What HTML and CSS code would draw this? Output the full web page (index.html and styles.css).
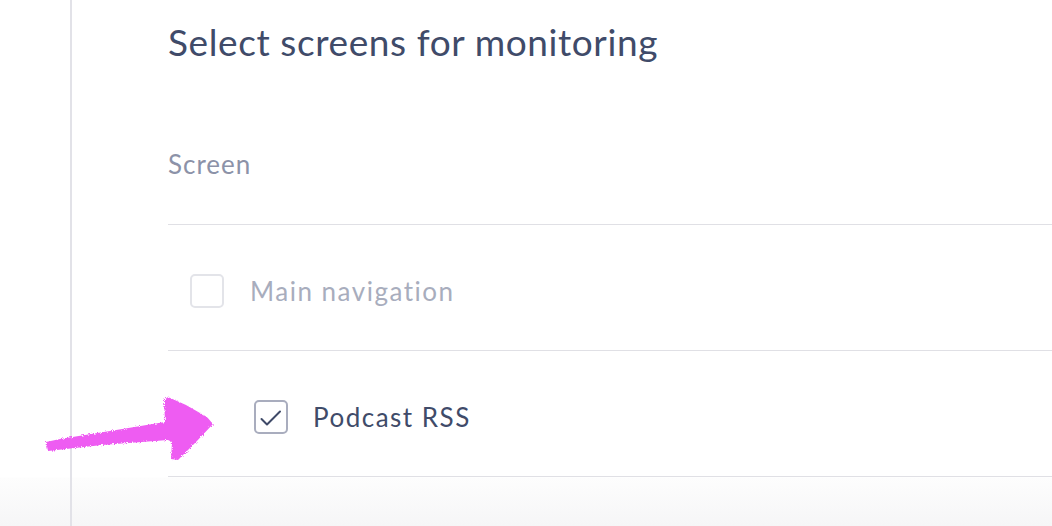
FILE: index.html
```html
<!DOCTYPE html>
<html lang="en">
<head>
  <meta charset="UTF-8" />
  <meta name="viewport" content="width=device-width, initial-scale=1" />
  <title>Select screens for monitoring</title>
  <link rel="stylesheet" href="styles.css">
</head>
<body>
  <div class="layout">
    <aside class="rail"></aside>

    <main class="content">
      <h1 class="page-title">Select screens for monitoring</h1>

      <div class="screen-table">
        <div class="table-head">Screen</div>

        <label class="screen-row disabled">
          <span class="check"></span>
          <span class="screen-name">Main navigation</span>
        </label>

        <label class="screen-row child">
          <span class="check checked">
            <svg viewBox="0 0 34 34" width="34" height="34">
              <polyline points="7.5,19 13,24.5 26,11.5" fill="none" stroke="#3f4a68" stroke-width="2" stroke-linecap="round" stroke-linejoin="round"/>
            </svg>
          </span>
          <span class="screen-name">Podcast RSS</span>
        </label>
      </div>
    </main>
  </div>

  <!-- hand drawn annotation -->
  <svg class="annotation" viewBox="0 0 190 80" width="190" height="80">
    <defs>
      <filter id="rough" x="-10%" y="-10%" width="120%" height="120%">
        <feTurbulence type="fractalNoise" baseFrequency="0.9" numOctaves="2" seed="3" result="noise"/>
        <feDisplacementMap in="SourceGraphic" in2="noise" scale="4"/>
      </filter>
    </defs>
    <path filter="url(#rough)" fill="#ee5cf2"
      d="M6,52 L8,61 L62,55 L128,50 L132,52 L131,69 L138,70 L156,52 L173,34 L167,27 L146,15 L128,7 L124,10 L125,32 L70,41 L20,49 Z"/>
  </svg>
</body>
</html>
```

FILE: styles.css
```css
body {
  margin: 0;
  min-height: 100vh;
  font-family: Lato, "Open Sans", sans-serif;
  color: #404b69;
  background: linear-gradient(to bottom, #fff 0, #fff 477px, #fdfdfd 478px, #f6f6f7 100%);
}

.layout {
  display: flex;
  min-height: 100vh;
}

.rail {
  width: 70px;
  flex-shrink: 0;
  border-right: 2px solid #e2e2e8;
}

.content {
  flex: 1;
  padding-left: 96px;
}

.page-title {
  margin: 20px 0 0;
  font-size: 37px;
  line-height: 44px;
  font-weight: 400;
  letter-spacing: 0.6px;
  color: #404b69;
}

.table-head {
  height: 161px;
  box-sizing: border-box;
  padding-top: 85px;
  font-size: 26px;
  line-height: 31px;
  letter-spacing: 1px;
  color: #8c92a8;
  border-bottom: 1px solid #e0e0e5;
}

.screen-row {
  display: flex;
  align-items: center;
  height: 126px;
  box-sizing: border-box;
  padding: 7px 0 0 22px;
  border-bottom: 1px solid #e0e0e5;
  font-size: 26px;
  line-height: 31px;
  letter-spacing: 1.5px;
  cursor: pointer;
}

.screen-row.child {
  padding-left: 86px;
}

.check {
  width: 34px;
  height: 34px;
  box-sizing: border-box;
  border: 2px solid #a9adbe;
  border-radius: 5px;
  margin-right: 25px;
  position: relative;
  flex-shrink: 0;
}

.check svg {
  position: absolute;
  top: -2px;
  left: -2px;
}

.disabled .check {
  border-color: #e3e4e9;
  margin-right: 26px;
}

.disabled .screen-name {
  color: #a8adbd;
}

.annotation {
  position: absolute;
  left: 40px;
  top: 390px;
}
```
